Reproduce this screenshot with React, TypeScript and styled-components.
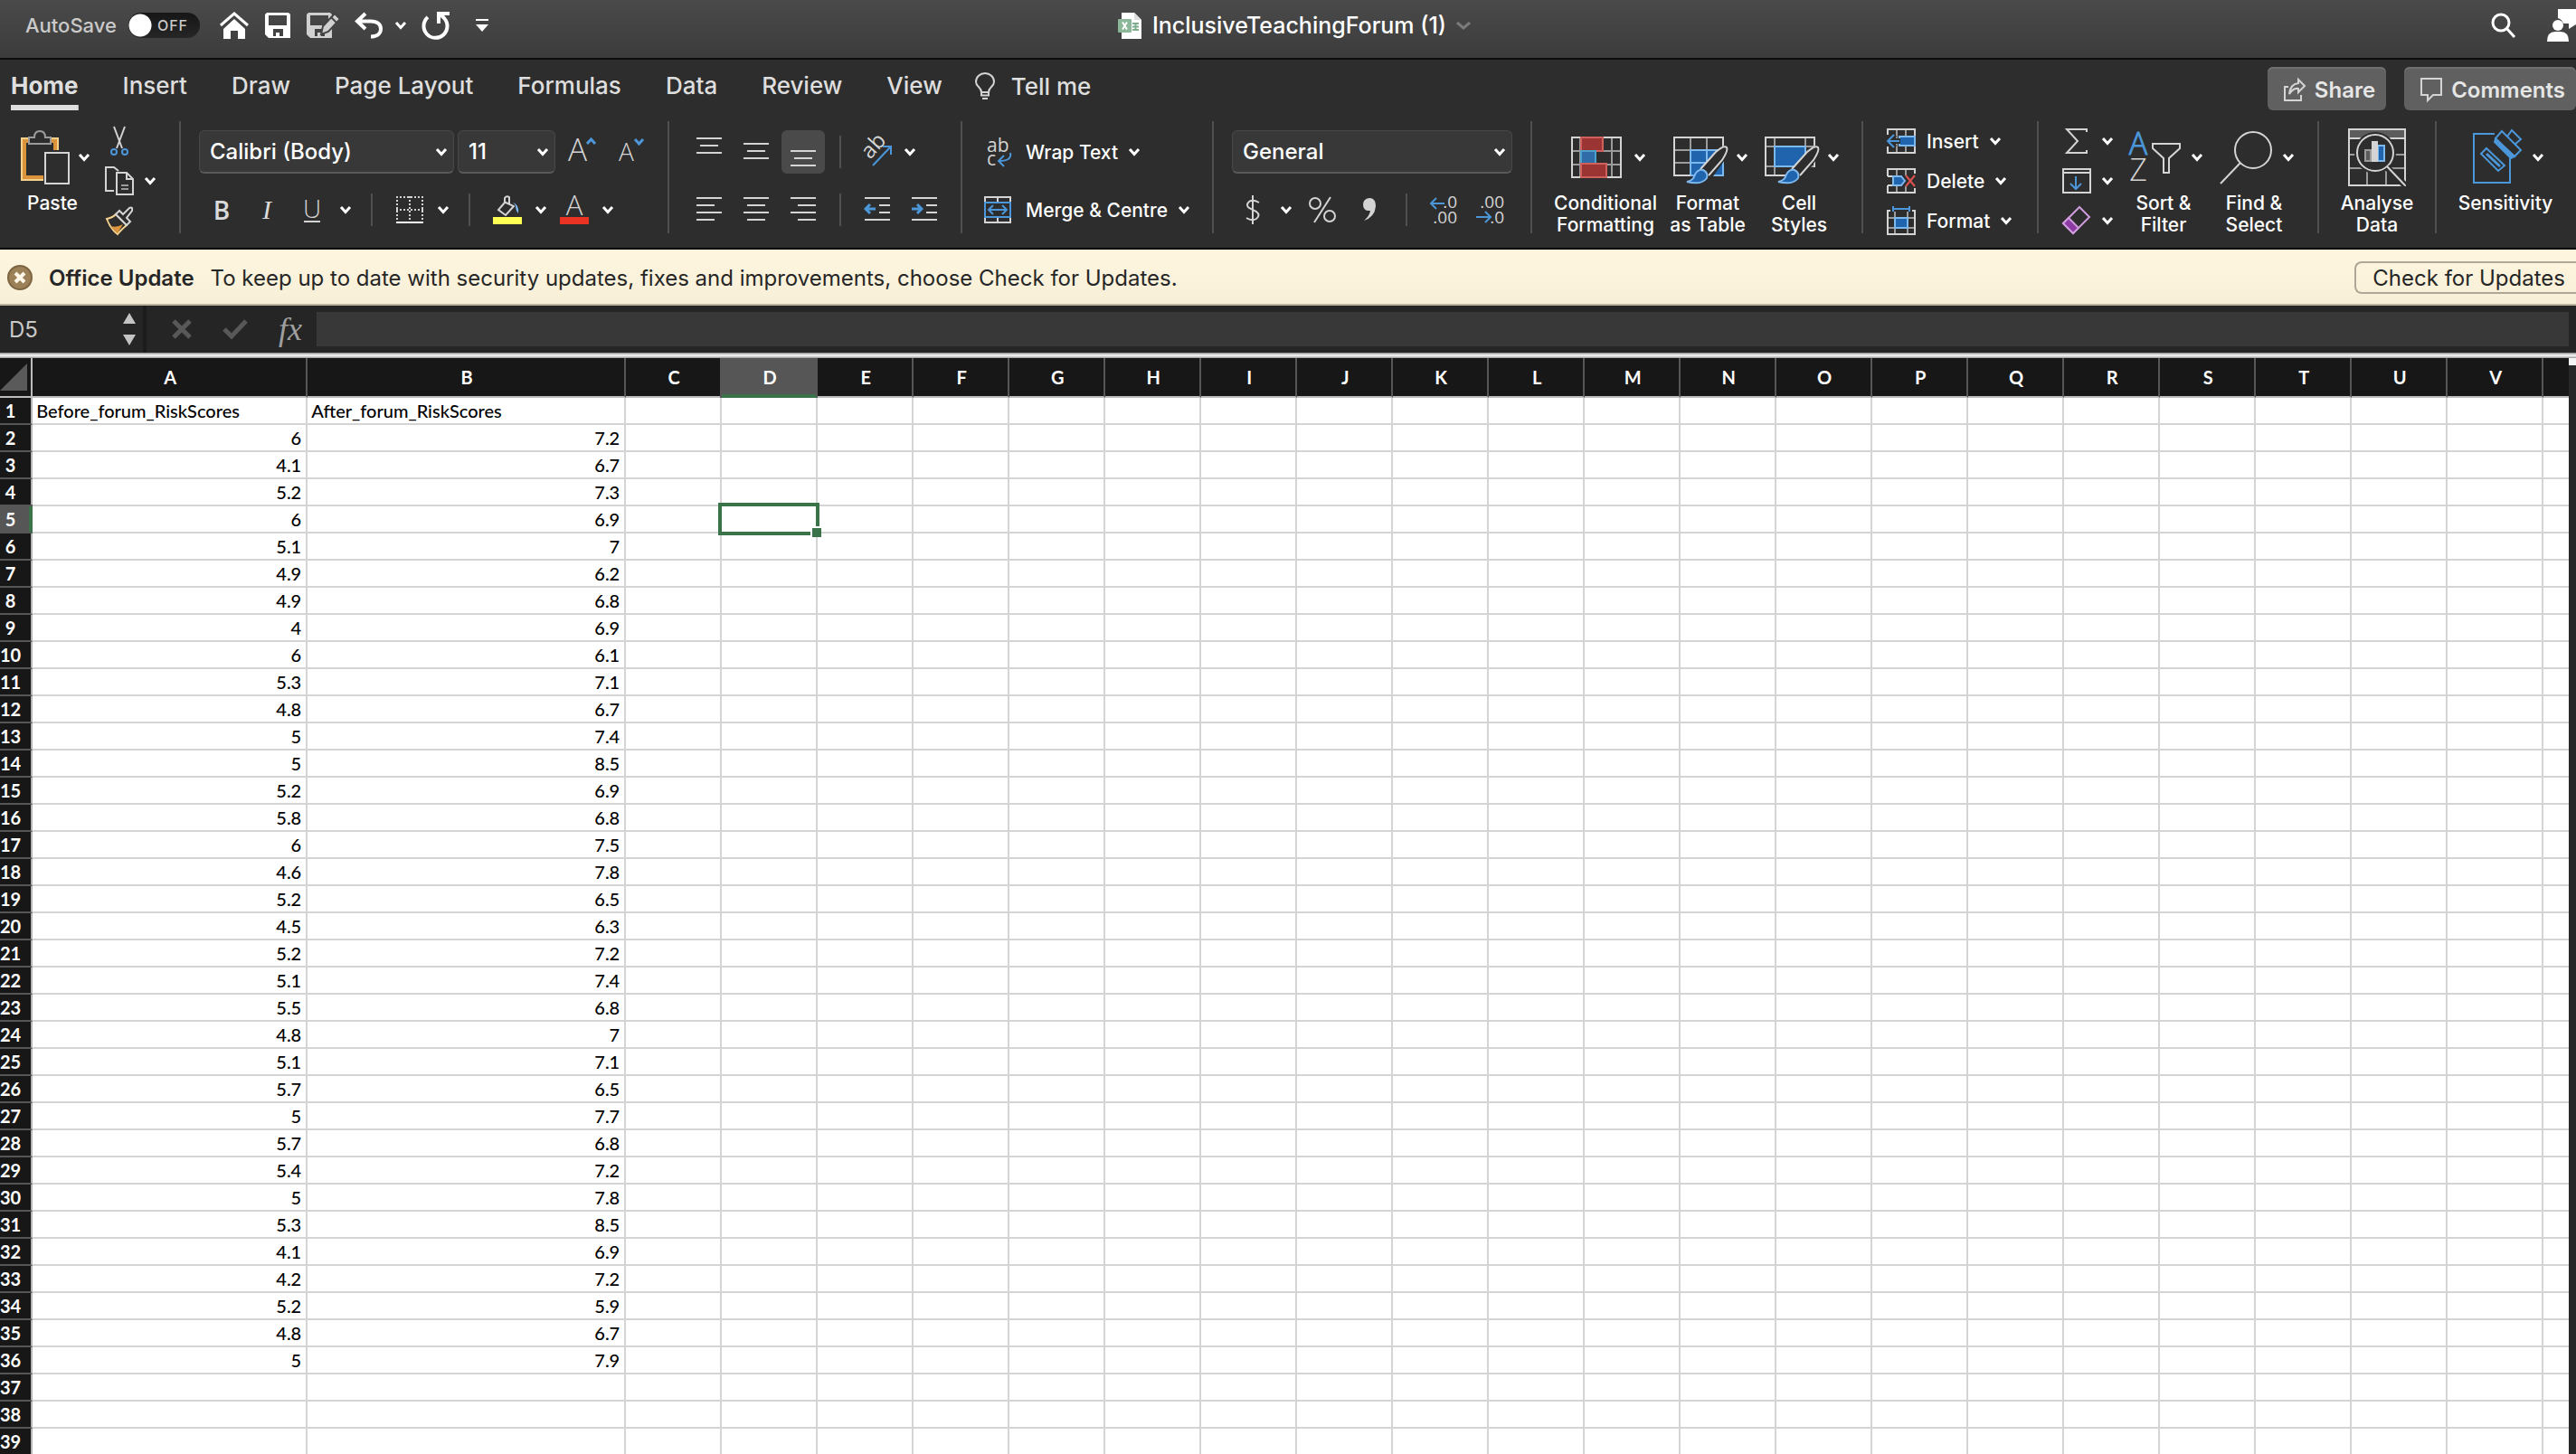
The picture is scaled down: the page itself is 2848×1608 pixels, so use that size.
import React, { useState } from "react";
import styled, { createGlobalStyle, css } from "styled-components";

const UI = `Inter, "Liberation Sans", sans-serif`;
const GLYPH = `"Open Sans", "Noto Sans", sans-serif`;
const CELL = `Lato, "Open Sans", sans-serif`;

const c = {
  line: "#d4d4d4",
  dim: "#9b9b9b",
  blue: "#4b97da",
  light: "#7db8ee",
  fill: "#2164ae",
  panel: "#2d2d2d",
  green: "#3a734a",
};

const GlobalStyle = createGlobalStyle`
  * { box-sizing: border-box; }
  body { margin: 0; background: #2d2d2d; font-family: ${UI}; }
  button, input, select { font: inherit; color: inherit; margin: 0; }
  button { background: none; border: 0; padding: 0; cursor: pointer; }
  svg { display: block; flex: none; overflow: visible; }
`;

const Window = styled.div`
  display: flex;
  flex-direction: column;
  height: 100vh;
  overflow: hidden;
`;

/* ---------- title bar ---------- */

const TitleBar = styled.header`
  display: grid;
  grid-template-columns: 1fr auto 1fr;
  align-items: center;
  flex: none;
  height: 66px;
  padding: 0 0 8px 14px;
  background: linear-gradient(#4a4a4a, #3c3c3c);
  border-bottom: 2px solid #0c0c0c;
  color: #fff;
`;

const QuickAccess = styled.div`
  display: flex;
  align-items: center;
  padding-left: 14px;
`;

const AutoSave = styled.label`
  display: flex;
  align-items: center;
  gap: 13px;
  margin-right: 22px;
  font-size: 22px;
  font-weight: 500;
  color: #cacaca;
`;

const Switch = styled.span`
  display: grid;
  align-items: center;
  width: 79px;
  height: 28px;
  > * { grid-area: 1 / 1; }
  span {
    padding-left: 32px;
    font-size: 16px;
    letter-spacing: 1px;
    pointer-events: none;
  }
`;

const SwitchInput = styled.input`
  appearance: none;
  width: 79px;
  height: 28px;
  border-radius: 14px;
  background: radial-gradient(circle at 13px 14px, #fff 12px, transparent 13px), linear-gradient(#161616, #262626);
  &:checked {
    background: radial-gradient(circle at 66px 14px, #fff 12px, transparent 13px), #2f7d4a;
  }
`;

const QuickButton = styled.button<{ $gap?: number }>`
  display: flex;
  margin-right: ${(p) => p.$gap ?? 18}px;
`;

const DocTitle = styled.h1`
  display: flex;
  align-items: center;
  gap: 11px;
  margin: 0;
  font-size: 25px;
  font-weight: 500;
`;

const TitleActions = styled.div`
  display: flex;
  align-items: center;
  justify-content: flex-end;
  gap: 34px;
`;

/* ---------- ribbon ---------- */

const Ribbon = styled.section`
  flex: none;
  background: ${c.panel};
  border-bottom: 2px solid #000;
  color: #fff;
`;

const TabRow = styled.div`
  display: flex;
  align-items: flex-start;
  justify-content: space-between;
  height: 68px;
  padding-left: 12px;
`;

const Tabs = styled.nav`
  display: flex;
  gap: 49px;
`;

const Tab = styled.a<{ $active?: boolean }>`
  height: 56px;
  font-size: 26px;
  line-height: 58px;
  font-weight: 500;
  color: #dedede;
  text-decoration: none;
  white-space: nowrap;
  ${(p) =>
    p.$active &&
    css`
      font-weight: 700;
      background: linear-gradient(#dedede, #dedede) bottom / 100% 6px no-repeat;
    `}
`;

const TellMe = styled.button`
  display: flex;
  align-items: center;
  gap: 18px;
  height: 58px;
  margin-left: -13px;
  font-size: 26px;
  font-weight: 500;
  color: #dedede;
`;

const Collaborate = styled.div`
  display: flex;
  gap: 20px;
  padding-top: 8px;
`;

const CollabButton = styled.button`
  display: flex;
  align-items: center;
  gap: 10px;
  height: 48px;
  padding: 2px 12px 0 18px;
  border-radius: 6px;
  background: #606060;
  box-shadow: inset 0 2px 0 #707070;
  color: #e6e6e6;
  font-size: 24px;
  font-weight: 600;
`;

const Body = styled.div`
  display: flex;
  align-items: flex-start;
  height: 140px;
`;

const Group = styled.div<{ $w: number; $pad?: number }>`
  display: flex;
  flex: none;
  align-items: flex-start;
  width: ${(p) => p.$w}px;
  height: 124px;
  padding-left: ${(p) => p.$pad ?? 0}px;
`;

const Divider = styled.div`
  flex: none;
  width: 2px;
  height: 124px;
  background: #505050;
`;

const Rows = styled.div`
  display: flex;
  flex-direction: column;
  gap: 16px;
  padding-top: 10px;
`;

const Row = styled.div`
  display: flex;
  align-items: center;
  height: 48px;
`;

const Slot = styled.button<{ $w: number }>`
  display: flex;
  align-items: center;
  justify-content: center;
  width: ${(p) => p.$w}px;
  height: 48px;
`;

const Pressed = styled.span`
  display: flex;
  align-items: center;
  justify-content: center;
  width: 48px;
  height: 48px;
  border-radius: 6px;
  background: #4a4a4a;
`;

const Thin = styled.div<{ $m: number }>`
  width: 2px;
  height: 36px;
  margin: 0 ${(p) => p.$m}px;
  background: #505050;
`;

const TextButton = styled.button<{ $gap: number; $h: number }>`
  display: flex;
  flex: none;
  align-items: center;
  gap: ${(p) => p.$gap}px;
  height: ${(p) => p.$h}px;
  font-size: 21px;
  font-weight: 500;
  white-space: nowrap;
`;

const IconBox = styled.span<{ $w: number }>`
  display: flex;
  justify-content: center;
  width: ${(p) => p.$w}px;
`;

const Stack = styled.div`
  display: flex;
  flex-direction: column;
`;

const BigButton = styled.button<{ $w: number; $ml?: number }>`
  display: flex;
  flex-direction: column;
  align-items: center;
  width: ${(p) => p.$w}px;
  margin-left: ${(p) => p.$ml ?? 0}px;
  font-size: 21px;
  font-weight: 500;
  line-height: 24px;
  white-space: nowrap;
`;

const BigIcon = styled.span<{ $menu: boolean }>`
  display: flex;
  align-items: center;
  gap: 10px;
  height: 79px;
  padding-left: ${(p) => (p.$menu ? 6 : 0)}px;
`;

const Picker = styled.span<{ $w: number }>`
  display: grid;
  align-items: center;
  width: ${(p) => p.$w}px;
  height: 48px;
  margin-right: 4px;
  > * { grid-area: 1 / 1; }
  > svg {
    justify-self: end;
    margin-right: 8px;
    pointer-events: none;
  }
`;

const Select = styled.select`
  appearance: none;
  width: 100%;
  height: 48px;
  padding: 0 11px;
  border: 1px solid #484848;
  border-bottom: 2px solid #5a5a5a;
  border-radius: 6px;
  background: #383838;
  font-size: 24px;
  font-weight: 500;
`;

const Glyph = styled.span<{ $style?: "bold" | "italic" }>`
  font-family: ${GLYPH};
  font-size: 28px;
  line-height: 36px;
  font-weight: 300;
  color: #dadada;
  ${(p) => p.$style === "bold" && "font-weight: 600;"}
  ${(p) => p.$style === "italic" && `font-family: "Liberation Serif", serif; font-style: italic; font-size: 30px; font-weight: 400;`}
`;

/* ---------- message and formula bars ---------- */

const UpdateBar = styled.section`
  display: flex;
  align-items: center;
  flex: none;
  height: 62px;
  padding: 2px 0 0 8px;
  background: linear-gradient(#fff6e0, #f8efd9);
  border-bottom: 2px solid #b9b39f;
  color: #262626;
  font-size: 24px;
  p { margin: 0; flex: 1; }
  strong { margin: 0 18px; font-weight: 600; }
`;

const UpdateButton = styled.button`
  height: 36px;
  padding: 0 12px 0 18px;
  border: 2px solid #aea795;
  border-right-width: 0;
  border-radius: 8px 0 0 8px;
`;

const FormulaBar = styled.section`
  display: flex;
  align-items: center;
  flex: none;
  height: 52px;
  padding-right: 8px;
  background: #252525;
`;

const NameBox = styled.div`
  display: flex;
  align-items: center;
  justify-content: space-between;
  width: 162px;
  height: 52px;
  padding: 0 8px 0 10px;
  border-right: 4px solid #1c1c1c;
`;

const NameInput = styled.input`
  width: 100px;
  padding: 0;
  border: 0;
  background: none;
  color: #c9c9c9;
  font-size: 24px;
`;

const FormulaTools = styled.div`
  display: flex;
  align-items: center;
  width: 188px;
  padding-left: 28px;
  gap: 34px;
`;

const Fx = styled.button`
  display: flex;
  gap: 2px;
  font-family: "Liberation Serif", serif;
  font-style: italic;
  font-size: 36px;
  line-height: 44px;
  color: #a0a0a0;
`;

const FormulaInput = styled.input`
  flex: 1;
  height: 38px;
  border: 0;
  background: #383838;
  color: #fff;
`;

/* ---------- sheet ---------- */

const Sash = styled.div`
  flex: none;
  height: 6px;
  background: linear-gradient(#8e8e8e, #d4d4d4 34%, #fff 50%, #dcdcdc 66%, #9a9a9a);
`;

const SheetArea = styled.main`
  display: flex;
  flex: 1;
  min-height: 0;
`;

const Sheet = styled.table`
  flex: 1;
  table-layout: fixed;
  border-collapse: separate;
  border-spacing: 0;
  align-self: flex-start;
  background: #fff;
  font-family: ${CELL};
  font-size: 20px;
  font-weight: 500;
  line-height: 28px;
  color: #000;
`;

const Col = styled.col<{ $w?: number }>`
  ${(p) => p.$w && `width: ${p.$w}px;`}
`;

const ColHead = styled.th<{ $on?: boolean }>`
  height: 44px;
  padding: 0 0 0 2px;
  background: #171717;
  border-right: 2px solid #565656;
  border-bottom: 2px solid #bcbcbc;
  color: #fff;
  font-weight: 700;
  &:last-child { border-right: 0; }
  ${(p) =>
    p.$on &&
    css`
      position: relative;
      background: #565656;
      border-bottom-color: ${c.green};
      box-shadow: inset 0 -2px 0 ${c.green}, -2px 0 0 #565656;
    `}
`;

const Corner = styled.th`
  padding: 0;
  background: #171717;
  border-right: 2px solid #bcbcbc;
  border-bottom: 2px solid #bcbcbc;
`;

const RowHead = styled.th<{ $on?: boolean }>`
  padding: 0 11px 0 0;
  background: #171717;
  border-right: 2px solid #b4b4b4;
  border-bottom: 2px solid #565656;
  color: #fff;
  font-weight: 700;
  text-align: center;
  ${(p) =>
    p.$on &&
    css`
      position: relative;
      background: #565656;
      border-right-color: ${c.green};
      box-shadow: inset -2px 0 0 ${c.green}, 0 -2px 0 #565656;
    `}
`;

const Cell = styled.td<{ $num?: boolean }>`
  position: relative;
  padding: 0 5px 0 4px;
  border-right: 2px solid #d4d4d4;
  border-bottom: 2px solid #d4d4d4;
  text-align: ${(p) => (p.$num ? "right" : "left")};
  white-space: nowrap;
  &:last-child { border-right: 0; }
`;

const Line = styled.tr`
  height: 30px;
  &:last-child { height: 28px; }
  &:last-child > * { border-bottom: 0; }
`;

const Selection = styled.span`
  position: absolute;
  z-index: 1;
  inset: -4px;
  border: 4px solid ${c.green};
  &::after {
    content: "";
    position: absolute;
    right: -6px;
    bottom: -6px;
    width: 10px;
    height: 10px;
    background: ${c.green};
    box-shadow: -2px -2px 0 #fff;
  }
`;

const ScrollTrack = styled.div`
  flex: none;
  width: 8px;
  background: #282828;
  border-top: 8px solid #f4f4f4;
`;

/* ---------- icons ---------- */

type IconProps = { w: number; h: number; s?: string; sw?: number; children: React.ReactNode };
const Icon = ({ w, h, s = c.line, sw = 2, children }: IconProps) => (
  <svg width={w} height={h} viewBox={`0 0 ${w} ${h}`} fill="none" stroke={s} strokeWidth={sw} aria-hidden="true">
    {children}
  </svg>
);

const Chevron = ({ color = "#fff" }: { color?: string }) => (
  <Icon w={12} h={10} s={color} sw={3}>
    <path d="M1 2L6 7.500L11 2" />
  </Icon>
);

const HomeIcon = () => (
  <Icon w={32} h={30} s="#fff" sw={3}>
    <path d="M1 15L16 2L31 15" />
    <path d="M16 8L4 19V30H12V21H20V30H28V19z" fill="#fff" stroke="none" />
  </Icon>
);

const floppy = "M2 0H26L28 2V28H4L0 24V2zM4 3V14H24V3zM9 18V26H12V22H16V26H20V18z";
const SaveIcon = () => (
  <Icon w={28} h={28}>
    <path d={floppy} fill="#fff" fillRule="evenodd" stroke="none" />
  </Icon>
);

const SaveEditIcon = () => (
  <Icon w={37} h={28}>
    <path d={floppy} fill="#d0d0d0" fillRule="evenodd" stroke="none" />
    <path d="M16 24L18 15L31 1L37 7L24 21z" fill="#d0d0d0" stroke="#434343" />
    <path d="M27 5L33 11" stroke="#434343" />
  </Icon>
);

const UndoIcon = () => (
  <Icon w={31} h={28} s="#fff" sw={4}>
    <path d="M12 1L3 9.500L12 18M3 9.500H18C25 9.500 29 13 29 18S25 26.500 18 26.500" />
  </Icon>
);

const RedoIcon = () => (
  <Icon w={31} h={30} s="#fff" sw={4}>
    <path d="M6 6A13 13 0 1 0 24 7L19 2" />
    <path d="M30 2H18V13" />
  </Icon>
);

const CustomiseIcon = () => (
  <Icon w={14} h={14} s="#fff">
    <path d="M0 1H14" />
    <path d="M0 6H14L7 14z" fill="#fff" stroke="none" />
  </Icon>
);

const WorkbookIcon = () => (
  <Icon w={27} h={29}>
    <path d="M4 0H18L26 8V29H4z" fill="#fff" stroke="none" />
    <path d="M18 0V8H26" fill="#ddd" stroke="none" />
    <path d="M16 12H23M16 15.500H23M16 19H23M19.500 11V20" stroke="#7fae8f" />
    <rect x="0" y="7" width="15" height="15" rx="1" fill="#8cb799" stroke="none" />
    <path d="M5 10.500L10 18.500M10 10.500L5 18.500" stroke="#fff" />
  </Icon>
);

const SearchIcon = () => (
  <Icon w={28} h={28} s="#fff" sw={3}>
    <circle cx="11" cy="11" r="9" />
    <path d="M17 17L26 27" />
  </Icon>
);

const PersonIcon = () => (
  <Icon w={32} h={36}>
    <path d="M12 0H32V17L24 22V16H18Q16 11 12 10z" fill="#fff" stroke="none" />
    <circle cx="12" cy="18" r="6" fill="#fff" stroke="none" />
    <path d="M0 36Q0 25 9 25H15Q24 25 24 36z" fill="#fff" stroke="none" />
  </Icon>
);

const BulbIcon = () => (
  <Icon w={22} h={30}>
    <path d="M7 22C7 16 1 16 1 10.500A10 9.500 0 0 1 21 10.500C21 16 15 16 15 22zM7 22V25.500H15V22M8 29H14" />
  </Icon>
);

const ShareIcon = () => (
  <Icon w={24} h={26}>
    <path d="M5 10H1V25H19V19" />
    <path d="M6 18Q7 7 16 6V2L23 9L16 16V12Q10 11 6 18z" />
  </Icon>
);

const CommentIcon = () => (
  <Icon w={24} h={27}>
    <path d="M1 1H23V19H14L8 25V19H1z" />
  </Icon>
);

const PasteIcon = () => (
  <Icon w={54} h={60}>
    <path d="M9 9H1V55H25M33 9H41V22" stroke="#f5d38f" />
    <path d="M9 12H4V52H25M33 12H38V22" stroke="#dc943c" strokeWidth={4} />
    <path d="M9 15V8H15C15 4 17 1 21 1S27 4 27 8H33V15z" stroke="#9b9b9b" />
    <rect x="27" y="25" width="26" height="34" />
  </Icon>
);

const CutIcon = () => (
  <Icon w={20} h={32}>
    <path d="M4 0L13 24M16 0L7 24" />
    <circle cx="4" cy="28" r="3" stroke={c.blue} />
    <circle cx="16" cy="28" r="3" stroke={c.blue} />
  </Icon>
);

const CopyIcon = () => (
  <Icon w={32} h={32}>
    <path d="M10 27H1V1H10L15 5" />
    <path d="M13 7H24L31 14V31H13zM24 7V14H31" />
    <path d="M18 21H26M18 25H26" stroke={c.dim} />
  </Icon>
);

const PainterIcon = () => (
  <Icon w={32} h={32}>
    <path d="M2 14Q8 13 12 9L24 21Q18 26 14 31Q6 25 2 14z" stroke="#f5d38f" />
    <path d="M6 22Q13 24 20 20L14 30z" fill="#dc943c" stroke="none" />
    <path d="M12 9L16 5L20 9L27 2Q31 0 30 5L24 13L28 17L24 21z" fill={c.panel} />
  </Icon>
);

const FontSizeIcon = ({ grow }: { grow?: boolean }) => (
  <Icon w={32} h={30} s={c.blue}>
    <text x={grow ? 0 : 4} y={25} fontFamily={GLYPH} fontWeight={300} fontSize={grow ? 35 : 28} fill={c.line} stroke="none">
      A
    </text>
    <path d={grow ? "M21 6L25.500 1L30 6" : "M22 1L26.500 6L31 1"} strokeWidth={3} />
  </Icon>
);

const UnderlineIcon = () => (
  <Icon w={20} h={30}>
    <text x="0" y="24" fontFamily={GLYPH} fontWeight={300} fontSize="28" fill={c.line} stroke="none">
      U
    </text>
    <path d="M1 28H19" />
  </Icon>
);

const BordersIcon = () => (
  <Icon w={30} h={30}>
    <path d="M0 1H30M0 15H30" strokeDasharray="2 2" />
    <path d="M1 0V26M15 0V26M29 0V26" strokeDasharray="2 2" />
    <path d="M0 29H30" stroke="#fff" />
  </Icon>
);

const FillIcon = () => (
  <Icon w={32} h={32}>
    <path d="M12 7L23 12L14 22L6 16L13 8V3Q15 0 18 2V9" />
    <path d="M22 8Q29 10 28 20Q25 17 25 11z" fill={c.light} stroke="none" />
    <path d="M0 24H32V32H0z" fill="#ffff54" stroke="none" />
  </Icon>
);

const FontColorIcon = () => (
  <Icon w={32} h={32}>
    <text x="16" y="22" textAnchor="middle" fontFamily={GLYPH} fontWeight={300} fontSize="31" fill={c.line} stroke="none">
      A
    </text>
    <path d="M0 24H32V32H0z" fill="#ea3323" stroke="none" />
  </Icon>
);

const TopAlign = () => (
  <Icon w={28} h={32}>
    <path d="M0 1H28M4 9H24M0 17H28" />
  </Icon>
);
const MiddleAlign = () => (
  <Icon w={28} h={32}>
    <path d="M0 7H28M4 15H24M0 23H28" />
  </Icon>
);
const BottomAlign = () => (
  <Icon w={28} h={32}>
    <path d="M0 15H28M4 23H24M0 31H28" />
  </Icon>
);

const TextAlign = ({ side }: { side: "left" | "centre" | "right" }) => {
  const short = { left: "M0 10H20M0 26H20", centre: "M4 10H24M4 26H24", right: "M8 10H28M8 26H28" }[side];
  return (
    <Icon w={28} h={30}>
      <path d={`M0 2H28M0 18H28${short}`} />
    </Icon>
  );
};

const IndentIcon = ({ out }: { out?: boolean }) => (
  <Icon w={28} h={30}>
    <path d="M0 2H28M16 10H28M16 18H28M0 26H28" />
    <path d={out ? "M12 14H2M6 9L1 14L6 19" : "M0 14H10M6 9L11 14L6 19"} stroke={c.blue} strokeWidth={3} />
  </Icon>
);

const OrientationIcon = () => (
  <Icon w={34} h={32}>
    <text x="9" y="25" transform="rotate(-48 9 25)" fontFamily={GLYPH} fontWeight={400} fontSize="24" fill={c.line} stroke="none">
      ab
    </text>
    <path d="M12 31L31 11M23 10H32V19" stroke={c.blue} />
  </Icon>
);

const WrapIcon = () => (
  <Icon w={24} h={32}>
    <text x="0" y="16" fontFamily={GLYPH} fontSize="21" fill={c.line} stroke="none">
      ab
    </text>
    <text x="0" y="31" fontFamily={GLYPH} fontSize="21" fill={c.line} stroke="none">
      c
    </text>
    <path d="M26 17Q28 26 14 26M19 20L13 26L19 32" stroke={c.blue} />
  </Icon>
);

const MergeIcon = () => (
  <Icon w={30} h={30}>
    <path d="M1 7V1H29V7M15 1V7M1 23V29H29V23M15 23V29" />
    <rect x="1" y="7" width="28" height="16" stroke={c.blue} />
    <path d="M6 15H24M10 10L5 15L10 20M20 10L25 15L20 20" stroke={c.blue} />
  </Icon>
);

const DollarIcon = () => (
  <Icon w={20} h={34}>
    <path d="M17 9Q10 5 6 8Q2 12 6 15L14 19Q19 23 14 27Q9 30 3 26M10 1V33" />
  </Icon>
);

const PercentIcon = () => (
  <Icon w={30} h={30}>
    <circle cx="7" cy="8" r="6" />
    <circle cx="23" cy="22" r="6" />
    <path d="M24 1L6 29" />
  </Icon>
);

const CommaIcon = () => (
  <Icon w={16} h={26}>
    <path d="M8 0Q15 0 15 9Q14 21 2 25Q8 20 9 14Q1 15 1 7Q1 1 8 0z" fill={c.line} stroke="none" />
  </Icon>
);

const DecimalIcon = ({ more }: { more?: boolean }) => (
  <Icon w={32} h={32} s={c.blue}>
    <g fontFamily={GLYPH} fontSize="19" fill={c.line} stroke="none" textAnchor="end">
      <text x="31" y="14">{more ? ".0" : ".00"}</text>
      <text x="31" y="31">{more ? ".00" : ".0"}</text>
    </g>
    <path d={more ? "M17 9H2M8 3L2 9L8 15" : "M0 24H16M10 18L16 24L10 30"} />
  </Icon>
);

const ConditionalIcon = () => (
  <Icon w={60} h={46}>
    <path d="M1 16H55M1 31H55M10 1V45M45 1V45" stroke={c.dim} />
    <rect x="1" y="1" width="54" height="44" />
    <path d="M11 17H44V30H11z" fill={c.panel} stroke="none" />
    <rect x="11" y="1" width="24" height="15" fill="#9a3534" stroke="#d0605c" />
    <rect x="11" y="16" width="16" height="14" fill="#2f6ca8" stroke="#4ba0cc" />
    <rect x="11" y="30" width="28" height="15" fill="#9a3534" stroke="#d0605c" />
  </Icon>
);

const Brush = () => (
  <g>
    <path d="M59 20Q55 19 48 27L32 46L26 52L14 60H32L40 54L56 32Q62 22 59 20z" fill={c.panel} stroke={c.panel} strokeWidth={4} />
    <path d="M30 44L47 25Q56 17 59 20Q61 23 54 34L39 51" />
    <path d="M15 58Q22 57 24 50Q27 44 33 45Q39 48 37 54Q31 62 15 58z" fill={c.fill} stroke={c.light} />
  </g>
);

const TableIcon = () => (
  <Icon w={60} h={62}>
    <path d="M1 23H55M1 37H55M19 9V51M37 9V51" stroke={c.dim} />
    <rect x="19" y="23" width="36" height="28" fill={c.fill} stroke={c.light} />
    <path d="M37 23V51M19 37H55" stroke={c.light} />
    <path d="M55 23V9H1V51H19" />
    <Brush />
  </Icon>
);

const StylesIcon = () => (
  <Icon w={60} h={62}>
    <path d="M1 19H55M1 41H55M11 9V51M45 9V51" stroke={c.dim} />
    <rect x="1" y="9" width="54" height="42" />
    <path d="M34 42H58V54H34z" fill={c.panel} stroke="none" />
    <rect x="11" y="19" width="34" height="22" fill={c.fill} stroke={c.light} />
    <Brush />
  </Icon>
);

const InsertIcon = () => (
  <Icon w={32} h={28}>
    <path d="M11 1V27M21 1V27" stroke={c.dim} />
    <path d="M1 7V1H31V27H1V20" />
    <rect x="14" y="9" width="17" height="10" fill={c.fill} stroke={c.light} />
    <path d="M3 14H15M9 7L2 14L9 21" stroke={c.panel} strokeWidth={6} />
    <path d="M2 14H14M8 7L1 14L8 21" stroke={c.blue} />
  </Icon>
);

const DeleteIcon = () => (
  <Icon w={32} h={28}>
    <path d="M11 1V8M21 1V8M11 20V27M21 20V27" stroke={c.dim} />
    <path d="M1 9V1H31V6M1 9H8M1 19V27H31V22M1 19H8" />
    <path d="M7 9H16L20 14L16 19H7z" fill={c.fill} stroke={c.light} />
    <path d="M21 8L31 20M31 8L21 20" stroke="#e0524d" />
  </Icon>
);

const FormatIcon = () => (
  <Icon w={32} h={32}>
    <path d="M9 6V31M23 6V31M1 13H31M1 24H31" stroke={c.dim} />
    <path d="M4 5H1V31H31V5H28" />
    <rect x="9" y="13" width="14" height="11" fill={c.fill} stroke={c.light} />
    <path d="M7 3H25M7 0V6M25 0V6" stroke={c.blue} />
  </Icon>
);

const SumIcon = () => (
  <Icon w={32} h={28}>
    <path d="M27 4V1H5L17 14L5 27H27V24" />
  </Icon>
);

const FillDownIcon = () => (
  <Icon w={32} h={28}>
    <path d="M1 1H31V27H1zM1 5H31" />
    <path d="M15 9V23M9 17L15 23L21 17" stroke={c.blue} />
  </Icon>
);

const EraserIcon = () => (
  <Icon w={32} h={32} s="#cf9bdc">
    <path d="M1 19L19 1L30 12L12 30z" />
    <path d="M1 19L7 13L18 24L12 30z" fill="#8c3ba3" />
  </Icon>
);

const SortIcon = () => (
  <Icon w={58} h={56}>
    <path d="M25 13H55V18L43 29V45H37V29L25 18z" />
    <text x="9" y="25" textAnchor="middle" fontFamily={GLYPH} fontSize="34" fontWeight={300} fill={c.blue} stroke={c.blue} strokeWidth={1}>
      A
    </text>
    <text x="9" y="54" textAnchor="middle" fontFamily={GLYPH} fontSize="34" fontWeight={300} fill={c.line} stroke="none">
      Z
    </text>
  </Icon>
);

const FindIcon = () => (
  <Icon w={60} h={60}>
    <circle cx="37" cy="22" r="20" />
    <path d="M23 36L1 59" />
  </Icon>
);

const AnalyseIcon = () => (
  <Icon w={64} h={64}>
    <path d="M2 2H62V10H2z" fill="#5c5c5c" stroke="none" />
    <path d="M1 29H63M1 44H63M21 44V63M42 44V63" stroke={c.dim} />
    <rect x="1" y="1" width="62" height="62" />
    <path d="M1 11H63" />
    <circle cx="30" cy="27" r="23" fill={c.panel} stroke="none" />
    <circle cx="30" cy="27" r="20" />
    <path d="M43 43L63 63" stroke={c.panel} strokeWidth={7} />
    <path d="M43 42L63 63" />
    <rect x="19" y="24" width="6" height="12" fill="#5c5c5c" stroke={c.dim} />
    <rect x="33" y="19" width="7" height="17" fill={c.fill} stroke={c.light} />
    <rect x="26" y="14" width="7" height="23" fill={c.line} stroke="none" />
  </Icon>
);

const SensitivityIcon = () => (
  <Icon w={56} h={66} s={c.blue}>
    <path d="M24 7H1V61H41V34" />
    <path d="M15 23L35 42L28 48L9 29z" />
    <path d="M15 29L30 43" strokeWidth={3} />
    <path d="M25 12L32 4L53 25L46 32z" />
    <path d="M25 13L46 32L42 34L24 16z" fill={c.blue} />
    <path d="M38 10L43 3L53 13L46 19" />
  </Icon>
);

const CloseIcon = () => (
  <Icon w={28} h={28} s="#fff8e8" sw={4}>
    <circle cx="14" cy="14" r="13" fill="#9c8058" stroke="#7d6542" strokeWidth={2} />
    <path d="M9 9L19 19M19 9L9 19" />
  </Icon>
);

const StepperIcon = () => (
  <Icon w={14} h={36}>
    <path d="M0 12L7 0L14 12zM0 24H14L7 36z" fill="#c3c3c3" stroke="none" />
  </Icon>
);

const CancelIcon = () => (
  <Icon w={22} h={20} s="#585858" sw={5}>
    <path d="M2 1L20 19M20 1L2 19" />
  </Icon>
);

const AcceptIcon = () => (
  <Icon w={28} h={22} s="#585858" sw={5}>
    <path d="M2 11L10 19L26 2" />
  </Icon>
);

const CornerIcon = () => (
  <Icon w={30} h={30}>
    <path d="M30 0V30H0z" fill="#5a5a5a" stroke="none" />
  </Icon>
);

/* ---------- data ---------- */

const before = [6, 4.1, 5.2, 6, 5.1, 4.9, 4.9, 4, 6, 5.3, 4.8, 5, 5, 5.2, 5.8, 6, 4.6, 5.2, 4.5, 5.2, 5.1, 5.5, 4.8, 5.1, 5.7, 5, 5.7, 5.4, 5, 5.3, 4.1, 4.2, 5.2, 4.8, 5];
const after = [7.2, 6.7, 7.3, 6.9, 7, 6.2, 6.8, 6.9, 6.1, 7.1, 6.7, 7.4, 8.5, 6.9, 6.8, 7.5, 7.8, 6.5, 6.3, 7.2, 7.4, 6.8, 7, 7.1, 6.5, 7.7, 6.8, 7.2, 7.8, 8.5, 6.9, 7.2, 5.9, 6.7, 7.9];
const columns = "ABCDEFGHIJKLMNOPQRSTUV".split("");
const rowNumbers = Array.from({ length: 39 }, (_, i) => i + 1);
const tabs = ["Home", "Insert", "Draw", "Page Layout", "Formulas", "Data", "Review", "View"];

const cellValue = (col: string, row: number): string | number | undefined => {
  if (col === "A") return row === 1 ? "Before_forum_RiskScores" : before[row - 2];
  if (col === "B") return row === 1 ? "After_forum_RiskScores" : after[row - 2];
  return undefined;
};

/* ---------- parts ---------- */

const Arrow = ({ label, w = 24 }: { label: string; w?: number }) => (
  <Slot $w={w} aria-label={label}>
    <Chevron />
  </Slot>
);

const Dropdown = ({ label, value, w }: { label: string; value: string; w: number }) => (
  <Picker $w={w}>
    <Select aria-label={label} defaultValue={value}>
      <option>{value}</option>
    </Select>
    <Chevron />
  </Picker>
);

const Big = ({ w, ml, icon, lines, menu = true }: { w: number; ml?: number; icon: React.ReactNode; lines: string[]; menu?: boolean }) => (
  <BigButton $w={w} $ml={ml}>
    <BigIcon $menu={menu}>
      {icon}
      {menu && <Chevron />}
    </BigIcon>
    {lines.map((l) => (
      <span key={l}>{l}</span>
    ))}
  </BigButton>
);

const Mini = ({ icon, label, menu = true }: { icon: React.ReactNode; label: string; menu?: boolean }) => (
  <TextButton $gap={12} $h={44} aria-label={label}>
    <IconBox $w={32}>{icon}</IconBox>
    {menu && <Chevron />}
  </TextButton>
);

const Labelled = ({ icon, label, iconW, h }: { icon: React.ReactNode; label: string; iconW: number; h: number }) => (
  <TextButton $gap={12} $h={h}>
    <IconBox $w={iconW}>{icon}</IconBox>
    {label}
    <Chevron />
  </TextButton>
);

export default function App() {
  const [autoSave, setAutoSave] = useState(false);
  return (
    <Window>
      <GlobalStyle />
      <TitleBar>
        <QuickAccess>
          <AutoSave>
            AutoSave
            <Switch>
              <SwitchInput type="checkbox" checked={autoSave} onChange={(e) => setAutoSave(e.target.checked)} />
              <span>{autoSave ? "ON" : "OFF"}</span>
            </Switch>
          </AutoSave>
          <QuickButton aria-label="Home"><HomeIcon /></QuickButton>
          <QuickButton aria-label="Save"><SaveIcon /></QuickButton>
          <QuickButton aria-label="Save as" $gap={16}><SaveEditIcon /></QuickButton>
          <QuickButton aria-label="Undo" $gap={14}><UndoIcon /></QuickButton>
          <QuickButton aria-label="Undo history"><Chevron /></QuickButton>
          <QuickButton aria-label="Repeat" $gap={28}><RedoIcon /></QuickButton>
          <QuickButton aria-label="Customise toolbar"><CustomiseIcon /></QuickButton>
        </QuickAccess>
        <DocTitle>
          <WorkbookIcon />
          InclusiveTeachingForum (1)
          <Icon w={16} h={10} s="#7a7a7a" sw={3}>
            <path d="M1 2L8 8L15 2" />
          </Icon>
        </DocTitle>
        <TitleActions>
          <button aria-label="Search"><SearchIcon /></button>
          <button aria-label="Account"><PersonIcon /></button>
        </TitleActions>
      </TitleBar>

      <Ribbon>
        <TabRow>
          <Tabs>
            {tabs.map((t) => (
              <Tab key={t} href="#" $active={t === "Home"}>{t}</Tab>
            ))}
            <TellMe><BulbIcon />Tell me</TellMe>
          </Tabs>
          <Collaborate>
            <CollabButton><ShareIcon />Share</CollabButton>
            <CollabButton><CommentIcon />Comments</CollabButton>
          </Collaborate>
        </TabRow>

        <Body>
          <Group $w={198}>
            <Big w={116} icon={<PasteIcon />} lines={["Paste"]} />
            <Stack>
              <Mini icon={<CutIcon />} label="Cut" menu={false} />
              <Mini icon={<CopyIcon />} label="Copy" />
              <Mini icon={<PainterIcon />} label="Format painter" menu={false} />
            </Stack>
          </Group>
          <Divider />

          <Group $w={538} $pad={20}>
            <Rows>
              <Row>
                <Dropdown label="Font" value="Calibri (Body)" w={282} />
                <Dropdown label="Font size" value="11" w={108} />
                <Slot $w={52} aria-label="Increase font size"><FontSizeIcon grow /></Slot>
                <Slot $w={52} aria-label="Decrease font size"><FontSizeIcon /></Slot>
              </Row>
              <Row>
                <Slot $w={50} aria-label="Bold"><Glyph $style="bold">B</Glyph></Slot>
                <Slot $w={50} aria-label="Italic"><Glyph $style="italic">I</Glyph></Slot>
                <Slot $w={50} aria-label="Underline"><UnderlineIcon /></Slot>
                <Arrow label="Underline options" />
                <Thin $m={16} />
                <Slot $w={50} aria-label="Borders"><BordersIcon /></Slot>
                <Arrow label="Border options" />
                <Thin $m={16} />
                <Slot $w={50} aria-label="Fill colour"><FillIcon /></Slot>
                <Arrow label="Fill colour options" />
                <Slot $w={50} aria-label="Font colour"><FontColorIcon /></Slot>
                <Arrow label="Font colour options" />
              </Row>
            </Rows>
          </Group>
          <Divider />

          <Group $w={322} $pad={18}>
            <Rows>
              <Row>
                <Slot $w={52} aria-label="Top align"><TopAlign /></Slot>
                <Slot $w={52} aria-label="Middle align"><MiddleAlign /></Slot>
                <Slot $w={52} aria-label="Bottom align"><Pressed><BottomAlign /></Pressed></Slot>
                <Thin $m={14} />
                <Slot $w={52} aria-label="Orientation"><OrientationIcon /></Slot>
                <Arrow label="Orientation options" w={20} />
              </Row>
              <Row>
                <Slot $w={52} aria-label="Align left"><TextAlign side="left" /></Slot>
                <Slot $w={52} aria-label="Centre"><TextAlign side="centre" /></Slot>
                <Slot $w={52} aria-label="Align right"><TextAlign side="right" /></Slot>
                <Thin $m={14} />
                <Slot $w={52} aria-label="Decrease indent"><IndentIcon out /></Slot>
                <Slot $w={52} aria-label="Increase indent"><IndentIcon /></Slot>
              </Row>
            </Rows>
          </Group>
          <Divider />

          <Group $w={276} $pad={20}>
            <Rows>
              <Labelled icon={<WrapIcon />} label="Wrap Text" iconW={38} h={48} />
              <Labelled icon={<MergeIcon />} label="Merge & Centre" iconW={38} h={48} />
            </Rows>
          </Group>
          <Divider />

          <Group $w={350} $pad={20}>
            <Rows>
              <Row>
                <Dropdown label="Number format" value="General" w={310} />
              </Row>
              <Row>
                <Slot $w={46} aria-label="Currency"><DollarIcon /></Slot>
                <Arrow label="Currency options" w={28} />
                <Slot $w={52} aria-label="Percent"><PercentIcon /></Slot>
                <Slot $w={52} aria-label="Comma style"><CommaIcon /></Slot>
                <Thin $m={14} />
                <Slot $w={52} aria-label="Increase decimal"><DecimalIcon more /></Slot>
                <Slot $w={52} aria-label="Decrease decimal"><DecimalIcon /></Slot>
              </Row>
            </Rows>
          </Group>
          <Divider />

          <Group $w={364} $pad={20}>
            <Big w={122} icon={<ConditionalIcon />} lines={["Conditional", "Formatting"]} />
            <Big w={104} icon={<TableIcon />} lines={["Format", "as Table"]} />
            <Big w={98} icon={<StylesIcon />} lines={["Cell", "Styles"]} />
          </Group>
          <Divider />

          <Group $w={192} $pad={26}>
            <Stack>
              <Labelled icon={<InsertIcon />} label="Insert" iconW={32} h={44} />
              <Labelled icon={<DeleteIcon />} label="Delete" iconW={32} h={44} />
              <Labelled icon={<FormatIcon />} label="Format" iconW={32} h={44} />
            </Stack>
          </Group>
          <Divider />

          <Group $w={308} $pad={26}>
            <Stack>
              <Mini icon={<SumIcon />} label="AutoSum" />
              <Mini icon={<FillDownIcon />} label="Fill" />
              <Mini icon={<EraserIcon />} label="Clear" />
            </Stack>
            <Big w={100} ml={6} icon={<SortIcon />} lines={["Sort &", "Filter"]} />
            <Big w={100} icon={<FindIcon />} lines={["Find &", "Select"]} />
          </Group>
          <Divider />

          <Group $w={128}>
            <Big w={128} icon={<AnalyseIcon />} lines={["Analyse", "Data"]} menu={false} />
          </Group>
          <Divider />

          <Group $w={152}>
            <Big w={152} icon={<SensitivityIcon />} lines={["Sensitivity"]} />
          </Group>
        </Body>
      </Ribbon>

      <UpdateBar>
        <button aria-label="Dismiss"><CloseIcon /></button>
        <p>
          <strong>Office Update</strong>
          To keep up to date with security updates, fixes and improvements, choose Check for Updates.
        </p>
        <UpdateButton>Check for Updates</UpdateButton>
      </UpdateBar>

      <FormulaBar>
        <NameBox>
          <NameInput aria-label="Name box" defaultValue="D5" />
          <button aria-label="Named ranges"><StepperIcon /></button>
        </NameBox>
        <FormulaTools>
          <button aria-label="Cancel"><CancelIcon /></button>
          <button aria-label="Enter"><AcceptIcon /></button>
          <Fx aria-label="Insert function">fx</Fx>
        </FormulaTools>
        <FormulaInput aria-label="Formula" />
      </FormulaBar>
      <Sash />

      <SheetArea>
        <Sheet>
          <colgroup>
            <Col $w={36} />
            {columns.map((l) => (
              <Col key={l} $w={l === "A" ? 304 : l === "B" ? 352 : 106} />
            ))}
            <Col />
          </colgroup>
          <thead>
            <tr>
              <Corner aria-label="Select all"><CornerIcon /></Corner>
              {columns.map((l) => (
                <ColHead key={l} scope="col" $on={l === "D"}>{l}</ColHead>
              ))}
              <ColHead />
            </tr>
          </thead>
          <tbody>
            {rowNumbers.map((r) => (
              <Line key={r}>
                <RowHead scope="row" $on={r === 5}>{r}</RowHead>
                {columns.map((l) => (
                  <Cell key={l} $num={r > 1}>
                    {cellValue(l, r)}
                    {l === "D" && r === 5 && <Selection />}
                  </Cell>
                ))}
                <Cell />
              </Line>
            ))}
          </tbody>
        </Sheet>
        <ScrollTrack />
      </SheetArea>
    </Window>
  );
}
